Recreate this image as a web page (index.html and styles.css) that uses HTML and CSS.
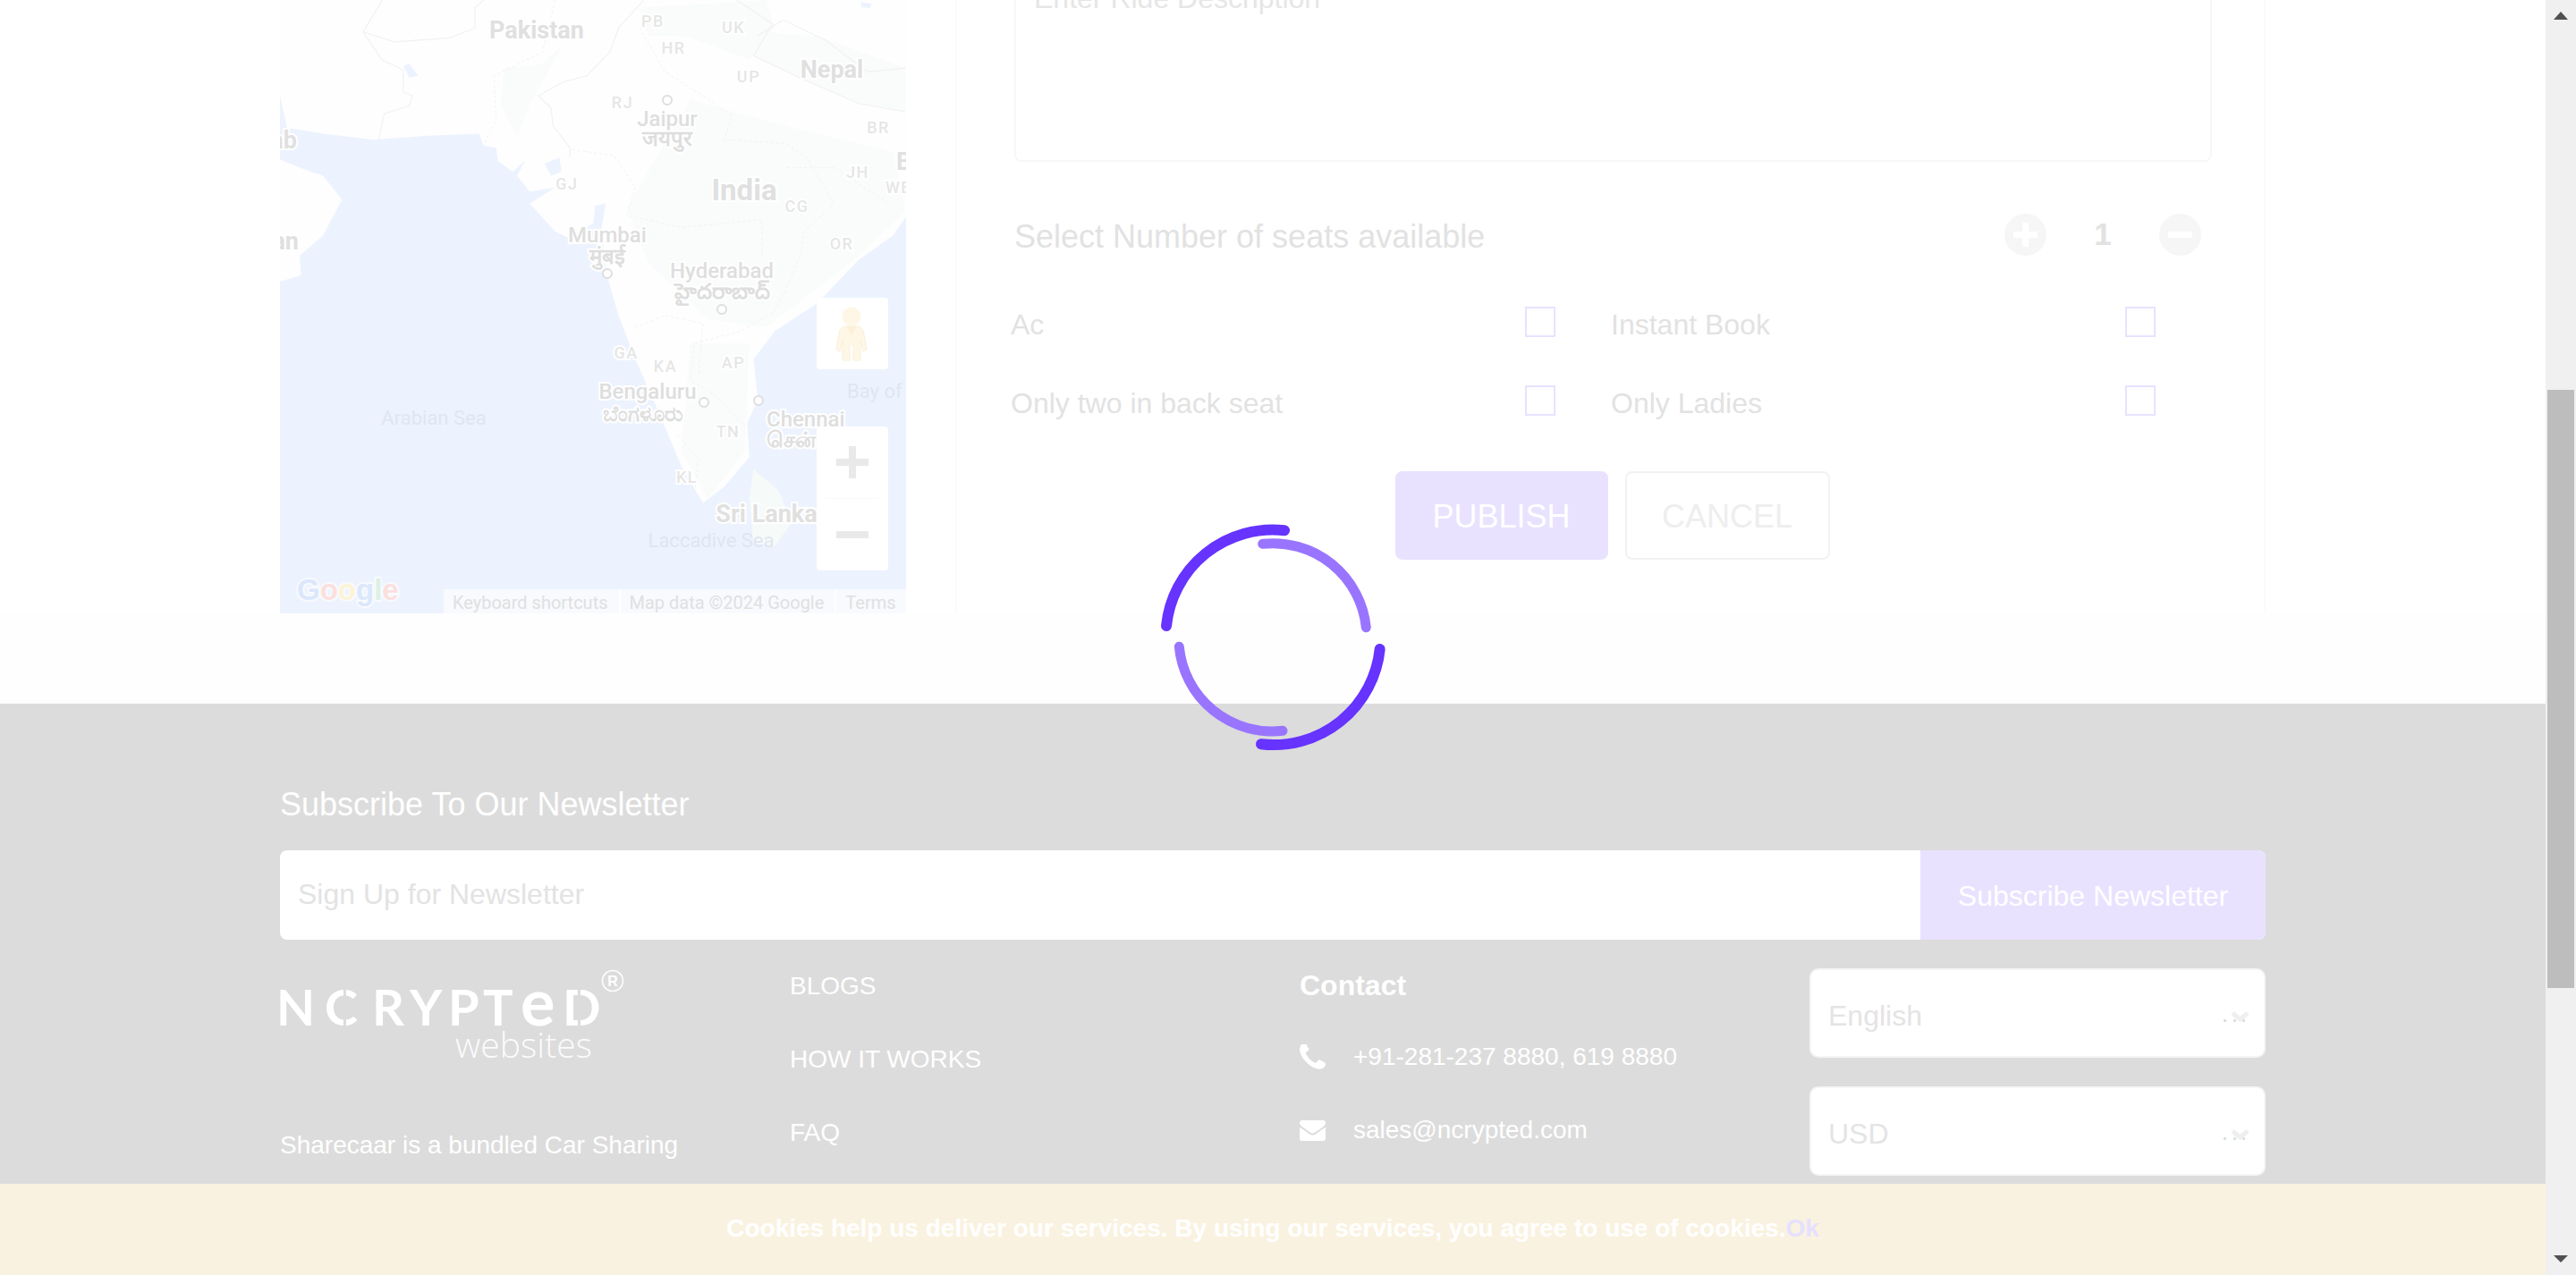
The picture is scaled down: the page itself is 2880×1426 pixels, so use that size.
FILE: index.html
```html
<!doctype html>
<html lang="en">
<head>
  <title>Post a Ride</title>
  <meta charset="utf-8" />
  <link rel="stylesheet" href="styles.css">
</head>
<body>

<div class="page">
  <section class="top">
    <div class="container top-row">

      <div class="map">
        <svg class="map-art" viewBox="0 0 700 746" width="700" height="746">
          <g transform="translate(-13.2 60) scale(.4719 .4464)">
            <rect x="0" y="-140" width="1600" height="1800" fill="#ecf3fe"/>
            <path class="land" d="M28 -140H1600V545H1510L1480 590L1400 650L1300 760L1200 830L1150 900L1160 1000L1135 1060L1140 1145L1080 1220L1030 1260L980 1170L920 1020L870 900L830 790L800 680L790 570L800 510L775 515L770 560L710 595L680 580L620 510L680 470L620 480L590 440L610 400L580 430L545 405L540 370L510 365L500 335L380 340L250 350L130 335L45 320L28 240Z"/>
            <path class="land" d="M28 400L100 430L130 440L175 500L130 590L75 640L78 690L28 705Z"/>
            <path class="isle" d="M1150 1175L1210 1230L1240 1310L1200 1370L1150 1360L1140 1250Z"/>
            <path class="green" d="M880 20L1180 0L1200 70L1140 150L1040 110L980 90L900 90Z"/>
            <path class="green" d="M1160 80L1300 90L1510 170V280L1400 260L1260 195L1150 140Z"/>
            <path class="green" d="M560 170L650 160L700 110L620 260L590 340L550 260Z"/>
            <path class="green" d="M1000 250L1240 320L1480 380L1510 530L1400 640L1280 740L1180 820L1040 800L900 660L850 520Z"/>
            <path class="green" d="M1000 860L1140 860L1130 1130L1040 1250L980 1130Z"/>
            <path class="water" d="M320 165L335 160L355 190L335 195Z"/>
            <path class="water" d="M655 410L690 395L695 430L670 440Z"/>
            <path class="water" d="M1405 5L1430 10L1425 20L1405 18Z"/>
            <path class="border" d="M270 -60V0L225 80L270 150L320 175L320 230L342 240L335 265L275 285L262 350"/>
            <path class="border" d="M225 80L300 105L430 95L490 70L490 20L510 0"/>
            <path class="border" d="M890 0L830 70L810 130L755 190L700 205L640 240L670 270L675 315L715 370L715 395"/>
            <path class="border" d="M1110 0L1195 60L1150 140L1260 195L1400 260L1510 280"/>
            <path class="border" d="M1160 90L1220 50L1320 100L1420 180L1510 170"/>
            <path class="state" d="M680 0L650 130L535 190L540 300L510 365"/>
            <path class="state" d="M880 70L940 180L1030 240L1100 290L1080 350L1230 360L1280 400L1340 510L1270 580L1260 640L1230 720L1200 780L1120 830L1010 860L1000 950L1070 1000L1130 1070"/>
            <path class="state" d="M720 375L820 390L870 470L850 540L980 570L1170 550L1170 640"/>
            <path class="state" d="M870 820L940 790L1030 810L1020 940"/>
            <path class="state" d="M970 1090L1020 1150L1010 1240"/>
            <path class="state" d="M1230 420L1340 420L1470 510"/>
          </g>

          <g transform="translate(0 60)">
            <text class="country" x="287" y="43">Pakistan</text>
            <text class="country" x="617" y="87">Nepal</text>
            <text class="country big" x="519" y="224">India</text>
            <text class="country" x="544" y="584">Sri Lanka</text>
            <text class="country end" x="19" y="166">Arab</text>
            <text class="country end" x="21" y="279">Oman</text>
            <text class="country start" x="689" y="190">Bangladesh</text>

            <text class="state-name" x="417" y="30">PB</text>
            <text class="state-name" x="507" y="37">UK</text>
            <text class="state-name" x="440" y="60">HR</text>
            <text class="state-name" x="524" y="92">UP</text>
            <text class="state-name" x="383" y="121">RJ</text>
            <text class="state-name" x="669" y="149">BR</text>
            <text class="state-name" x="321" y="212">GJ</text>
            <text class="state-name" x="646" y="199">JH</text>
            <text class="state-name" x="692" y="216">WB</text>
            <text class="state-name" x="578" y="237">CG</text>
            <text class="state-name" x="628" y="279">OR</text>
            <text class="state-name" x="387" y="401">GA</text>
            <text class="state-name" x="431" y="416">KA</text>
            <text class="state-name" x="507" y="412">AP</text>
            <text class="state-name" x="501" y="489">TN</text>
            <text class="state-name" x="455" y="540">KL</text>

            <text class="city" x="433" y="141">Jaipur</text>
            <text class="city local" x="433" y="163">जयपुर</text>
            <text class="city" x="366" y="271">Mumbai</text>
            <text class="city local" x="366" y="295">मुंबई</text>
            <text class="city" x="494" y="311">Hyderabad</text>
            <text class="city local" x="494" y="334">హైదరాబాద్</text>
            <text class="city" x="411" y="446">Bengaluru</text>
            <text class="city local" x="406" y="471">ಬೆಂಗಳೂರು</text>
            <text class="city start" x="544" y="477">Chennai</text>
            <text class="city local start" x="544" y="500">சென்னை</text>

            <circle class="dot" cx="433" cy="112" r="5"/>
            <circle class="dot" cx="366" cy="306" r="5"/>
            <circle class="dot" cx="494" cy="346" r="5"/>
            <circle class="dot" cx="474" cy="450" r="5"/>
            <circle class="dot" cx="535" cy="448" r="5"/>

            <text class="sea" x="172" y="475">Arabian Sea</text>
            <text class="sea" x="482" y="612">Laccadive Sea</text>
            <text class="sea start" x="634" y="445">Bay of</text>

            <text class="google" x="19" y="671"><tspan fill="#dbe7fb">G</tspan><tspan fill="#fbe0dd">o</tspan><tspan fill="#fdf3d6">o</tspan><tspan fill="#dbe7fb">g</tspan><tspan fill="#dcf0e3">l</tspan><tspan fill="#fbe0dd">e</tspan></text>
          </g>
        </svg>

        <div class="map-btn pegman">
          <svg viewBox="0 0 80 80" width="80" height="80">
            <circle cx="39" cy="21" r="10.5" fill="#fef7e6"/>
            <path d="M30 32H48L52 36L56 58L52 60L49 48V70H41V52H37V70H29V48L26 60L22 58L26 36Z" fill="#fef7e6" stroke="#f8f0dc" stroke-width="1"/>
            <path d="M33 32L39 42L45 32Z" fill="#fcf0d8"/>
          </svg>
        </div>

        <div class="map-btn zoom">
          <svg viewBox="0 0 80 161" width="80" height="161">
            <path d="M36 22H44V36H58V44H44V58H36V44H22V36H36Z" fill="#e9e9e9"/>
            <rect x="10" y="80" width="60" height="1" fill="#f8f8f8"/>
            <rect x="22" y="117" width="36" height="8" fill="#e9e9e9"/>
          </svg>
        </div>

        <div class="map-terms">
          <span class="term">Keyboard shortcuts</span>
          <span class="term">Map data ©2024 Google</span>
          <span class="term">Terms</span>
        </div>
      </div>

      <div class="ride-card">
        <div class="ride-desc">Enter Ride Description</div>

        <div class="seats">
          <span class="seats-label">Select Number of seats available</span>
          <div class="stepper">
            <svg class="step-btn" viewBox="0 0 47 47" width="47" height="47">
              <circle cx="23.5" cy="23.5" r="23.5" fill="#f6f6f6"/>
              <path d="M20 10H27V20H37V27H27V37H20V27H10V20H20Z" fill="#fff"/>
            </svg>
            <span class="step-value">1</span>
            <svg class="step-btn" viewBox="0 0 47 47" width="47" height="47">
              <circle cx="23.5" cy="23.5" r="23.5" fill="#f6f6f6"/>
              <rect x="10" y="20" width="27" height="7" fill="#fff"/>
            </svg>
          </div>
        </div>

        <div class="options">
          <div class="option"><span>Ac</span><i class="check"></i></div>
          <div class="option"><span>Instant Book</span><i class="check"></i></div>
          <div class="option"><span>Only two in back seat</span><i class="check"></i></div>
          <div class="option"><span>Only Ladies</span><i class="check"></i></div>
        </div>

        <div class="actions">
          <a class="btn btn-publish">PUBLISH</a>
          <a class="btn btn-cancel">CANCEL</a>
        </div>
      </div>

    </div>
  </section>

  <div class="gap-strip"></div>

  <footer class="footer">
    <div class="container">
      <h3 class="news-title">Subscribe To Our Newsletter</h3>
      <div class="news-form">
        <div class="news-input">Sign Up for Newsletter</div>
        <a class="news-btn">Subscribe Newsletter</a>
      </div>

      <div class="footer-cols">
        <div class="col-about">
          <svg class="logo" viewBox="0 0 385 105" width="385" height="105">
            <text class="logo-main" x="-4 50 103 145 188 227" y="64">NCRYPT<tspan class="logo-e" x="269">e</tspan><tspan x="316">D</tspan></text>
            <rect x="71" y="20" width="3" height="14" fill="#dcdcdc"/>
            <rect x="71" y="52" width="3" height="14" fill="#dcdcdc"/>
            <rect x="333" y="20" width="3" height="46" fill="#dcdcdc"/>
            <text class="logo-sub" x="196" y="100" textLength="153">websites</text>
            <circle cx="372" cy="14" r="11.5" fill="none" stroke="#fff" stroke-width="1.5"/>
            <text class="logo-r" x="372" y="20">R</text>
          </svg>
          <p class="about-text">Sharecaar is a bundled Car Sharing</p>
        </div>

        <div class="col-links">
          <a>BLOGS</a>
          <a>HOW IT WORKS</a>
          <a>FAQ</a>
        </div>

        <div class="col-contact">
          <h4>Contact</h4>
          <div class="contact-row">
            <svg viewBox="192 192 1408 1408" width="29" height="29"><path d="M1600 1240q0 27-10 70.5t-21 68.5q-21 50-122 106-94 51-186 51-27 0-53-3.5t-57.5-12.5-47-14.5-55.5-20.5-49-18q-98-35-175-83-127-79-264-216t-216-264q-48-77-83-175-3-9-18-49t-20.5-55.5-14.5-47-12.5-57.5-3.5-53q0-92 51-186 56-101 106-122 25-11 68.5-21t70.5-10q14 0 21 3 18 6 53 76 11 19 30 54t35 63.5 31 53.5q3 4 17.5 25t21.5 35.5 7 28.5q0 20-28.5 50t-62 55-62 53-28.5 46q0 9 5 22.5t8.5 20.5 14 24 11.5 19q76 137 174 235t235 174q2 1 19 11.5t24 14 20.5 8.5 22.5 5q18 0 46-28.5t53-62 55-62 50-28.5q14 0 28.5 7t35.5 21.5 25 17.5q25 15 53.5 31t63.5 35 54 30q70 35 76 53 3 7 3 21z" fill="#fff"/></svg>
            <span>+91-281-237 8880, 619 8880</span>
          </div>
          <div class="contact-row">
            <svg viewBox="0 256 1792 1408" width="29" height="23"><path d="M1792 710v794q0 66-47 113t-113 47h-1472q-66 0-113-47t-47-113v-794q44 49 101 87 362 246 497 345 57 42 92.5 65.5t94.5 48 110 24.5h2q51 0 110-24.5t94.5-48 92.5-65.5q170-123 498-345 57-39 100-87zm0-294q0 79-49 151t-122 123q-376 261-468 325-10 7-42.5 30.5t-54 38-52 32.5-57.5 27-50 9h-2q-23 0-50-9t-57.5-27-52-32.5-54-38-42.5-30.5q-91-64-262-182.5t-205-142.5q-62-42-117-115.5t-55-136.5q0-78 41.5-130t118.5-52h1472q65 0 112.5 47t47.5 113z" fill="#fff"/></svg>
            <span>sales@ncrypted.com</span>
          </div>
        </div>

        <div class="col-selects">
          <div class="select">
            <span>English</span>
            <svg viewBox="0 0 44 18" width="44" height="18"><rect x="3" y="14" width="3" height="3" fill="#d9e0e2"/><rect x="14" y="14" width="3" height="3" fill="#d9e0e2"/><rect x="24" y="14" width="3" height="3" fill="#d9e0e2"/><path d="M13 7L21.500 14L30 7" fill="none" stroke="#efefef" stroke-width="5"/></svg>
          </div>
          <div class="select">
            <span>USD</span>
            <svg viewBox="0 0 44 18" width="44" height="18"><rect x="3" y="14" width="3" height="3" fill="#d9e0e2"/><rect x="14" y="14" width="3" height="3" fill="#d9e0e2"/><rect x="24" y="14" width="3" height="3" fill="#d9e0e2"/><path d="M13 7L21.500 14L30 7" fill="none" stroke="#efefef" stroke-width="5"/></svg>
          </div>
        </div>
      </div>
    </div>
  </footer>
</div>

<div class="scrollbar">
  <svg viewBox="0 0 34 34" width="34" height="34"><path d="M9 22H25L17 13Z" fill="#505050"/></svg>
  <div class="scroll-track"><div class="scroll-thumb"></div></div>
  <svg viewBox="0 0 34 34" width="34" height="34"><path d="M9 12H25L17 20Z" fill="#505050"/></svg>
</div>

<div class="cookie-bar">
  <b>Cookies help us deliver our services. By using our services, you agree to use of cookies.<a>Ok</a></b>
</div>

<div class="loader">
  <svg viewBox="0 0 280 280" width="280" height="280">
    <g fill="none" stroke-linecap="round">
      <path d="M153 20.300A119.600 119.600 0 0 0 21 127" stroke="#6633ff" stroke-width="12"/>
      <path d="M259.700 153A119.600 119.600 0 0 1 127 259.300" stroke="#6633ff" stroke-width="12"/>
      <path d="M128.700 35.300A104.500 104.500 0 0 1 244.300 128.700" stroke="#9975ff" stroke-width="11"/>
      <path d="M35.300 150.300A104.500 104.500 0 0 0 151 244.300" stroke="#9975ff" stroke-width="11"/>
    </g>
  </svg>
</div>

</body>
</html>
```

FILE: styles.css
```css
html, body {
  margin: 0;
  height: 100%;
  overflow: hidden;
}

body {
  display: flex;
  background: #fff;
  font-family: "Liberation Sans", Arial, sans-serif;
  color: #e2e2e2;
}

.page {
  flex: 1;
  min-width: 0;
  margin-top: -60px;
}

.container {
  width: 2220px;
  margin: 0 auto;
}

/* ride form + map */
.top {
  height: 746px;
}

.top-row {
  display: flex;
  gap: 55px;
  height: 100%;
}

.map {
  position: relative;
  flex: 0 0 700px;
  height: 746px;
  overflow: hidden;
}

.map-art {
  display: block;
}

.land { fill: #fefefe; }
.isle { fill: #f6faf8; }
.green { fill: #f9fcfa; }
.water { fill: #ecf3fe; }
.border { fill: none; stroke: #f1f1f1; stroke-width: 2.5; }
.state { fill: none; stroke: #f1f1f1; stroke-width: 2; stroke-dasharray: 7 6; }

.map-art text {
  font-family: Roboto, sans-serif;
  text-anchor: middle;
  paint-order: stroke;
  stroke: #fff;
  stroke-width: 4px;
}

.map-art text.start { text-anchor: start; }
.map-art text.end { text-anchor: end; }

.country {
  font-size: 27px;
  font-weight: 700;
  fill: #e0e0e0;
}

.country.big { font-size: 33px; }

.state-name {
  font-size: 18px;
  font-weight: 500;
  letter-spacing: 1.5px;
  fill: #e6e6e6;
}

.city {
  font-size: 24px;
  font-weight: 500;
  fill: #dedede;
}

.city.local {
  font-weight: 700;
}

.dot {
  fill: #fff;
  stroke: #dedede;
  stroke-width: 2;
}

.map-art text.sea {
  font-size: 22px;
  fill: #dfe6f1;
  stroke: none;
}

.map-art text.google {
  font-family: "Liberation Sans", sans-serif;
  font-size: 33px;
  font-weight: 700;
  text-anchor: start;
  stroke: #f8fafe;
  stroke-width: 4px;
}

.map-btn {
  position: absolute;
  left: 600px;
  background: #fff;
  border-radius: 4px;
}

.map-btn svg {
  display: block;
}

.pegman {
  top: 393px;
  height: 80px;
}

.zoom {
  top: 537px;
  height: 161px;
}

.map-terms {
  position: absolute;
  right: 0;
  bottom: 0;
  left: 183px;
  display: flex;
  height: 27px;
  background: #f8fafe;
  font-family: Roboto, sans-serif;
  font-size: 20px;
  line-height: 30px;
  color: #e0e0e0;
}

.term {
  padding: 0 12px 0 10px;
  border-right: 2px solid #fff;
  white-space: nowrap;
}

.term:last-child {
  border: 0;
}

.ride-card {
  flex: 1;
  height: 746px;
  box-sizing: border-box;
  padding: 0 58px 0 64px;
  border-right: 2px solid #fbfbfb;
  border-left: 2px solid #fbfbfb;
}

.ride-desc {
  box-sizing: border-box;
  height: 241px;
  padding: 40px 20px 0;
  border: 2px solid #f7f7f7;
  border-top: 0;
  border-radius: 0 0 8px 8px;
  font-size: 32px;
  line-height: 36px;
  color: #e6e6e6;
}

.seats {
  display: flex;
  align-items: center;
  justify-content: space-between;
  height: 47px;
  margin-top: 58px;
  padding-right: 12px;
}

.seats-label {
  font-size: 36px;
  padding-top: 4px;
}

.stepper {
  display: flex;
  align-items: center;
  width: 220px;
  justify-content: space-between;
}

.step-value {
  font-size: 35px;
  font-weight: 700;
  margin-top: -2px;
}

.options {
  display: grid;
  grid-template-columns: 609px 609px;
  column-gap: 62px;
  row-gap: 54px;
  margin: 57px 0 0 -4px;
}

.option {
  display: flex;
  align-items: center;
  justify-content: space-between;
  height: 34px;
  font-size: 32px;
}

.option span {
  margin-top: 6px;
}

.check {
  box-sizing: border-box;
  width: 34px;
  height: 34px;
  border: 2px solid #e8e2ff;
}

.actions {
  display: flex;
  justify-content: center;
  gap: 19px;
  margin-top: 62px;
  padding-right: 2px;
}

.btn {
  box-sizing: border-box;
  display: block;
  height: 99px;
  border-radius: 8px;
  font-size: 36px;
  line-height: 102px;
  text-align: center;
}

.btn-publish {
  width: 238px;
  background: #e8e2ff;
  color: #fff;
}

.btn-cancel {
  width: 229px;
  border: 2px solid #f2f2f2;
  line-height: 98px;
  color: #eeeeee;
}

.gap-strip {
  height: 101px;
  background: #fefefe;
}

/* footer */
.footer {
  height: 700px;
  background: #dcdcdc;
  color: #fff;
}

.news-title {
  margin: 0;
  padding-top: 92px;
  font-size: 36px;
  font-weight: 400;
  line-height: 42px;
}

.news-form {
  display: flex;
  height: 100px;
  margin-top: 30px;
  border-radius: 8px;
  overflow: hidden;
  background: #fff;
}

.news-input {
  flex: 1;
  padding-left: 20px;
  font-size: 32px;
  line-height: 98px;
  color: #e3e3e3;
}

.news-btn {
  width: 386px;
  background: #e8e2ff;
  font-size: 32px;
  line-height: 102px;
  text-align: center;
  color: #fff;
}

.footer-cols {
  display: grid;
  grid-template-columns: repeat(4, 510px);
  column-gap: 60px;
  padding-top: 32px;
}

.logo {
  display: block;
}

.logo-main {
  font-family: Lato, sans-serif;
  font-size: 56px;
  font-weight: 700;
  fill: #fff;
}

.logo-e {
  font-size: 72px;
}

.logo-sub {
  font-family: "Open Sans", sans-serif;
  font-size: 39px;
  font-weight: 300;
  fill: #fbfbfb;
}

.logo-r {
  font-family: "Liberation Sans", sans-serif;
  font-size: 16px;
  font-weight: 700;
  text-anchor: middle;
  fill: #fff;
}

.about-text {
  margin: 76px 0 0;
  font-size: 28px;
  line-height: 34px;
}

.col-links {
  padding-top: 4px;
}

.col-links a {
  display: block;
  margin-bottom: 50px;
  font-size: 28px;
  line-height: 32px;
}

.col-contact {
  padding-top: 1px;
}

.col-contact h4 {
  margin: 0 0 37px;
  font-size: 32px;
  line-height: 36px;
}

.contact-row {
  display: flex;
  align-items: center;
  gap: 31px;
  height: 50px;
  margin-bottom: 32px;
  font-size: 28px;
}

.select {
  box-sizing: border-box;
  display: flex;
  align-items: center;
  justify-content: space-between;
  height: 100px;
  margin-bottom: 32px;
  padding: 4px 4px 0 19px;
  border: 2px solid #f5f5f5;
  border-radius: 10px;
  background: #fff;
  font-size: 32px;
  color: #e4e4e4;
}

.select span {
  margin-top: 2px;
}

/* fake scrollbar */
.scrollbar {
  display: flex;
  flex-direction: column;
  flex: 0 0 34px;
  background: #f0f0f0;
}

.scrollbar svg {
  display: block;
}

.scroll-track {
  flex: 1;
}

.scroll-thumb {
  width: 30px;
  height: 669px;
  margin: 402px 0 0 2px;
  background: #bdbdbd;
}

/* overlays */
.cookie-bar {
  position: fixed;
  right: 34px;
  bottom: 0;
  left: 0;
  height: 102px;
  background: #faf2e0;
  font-size: 28px;
  line-height: 100px;
  text-align: center;
  color: #fff;
}

.cookie-bar a {
  color: #e6e0ff;
}

.loader {
  position: fixed;
  top: 0;
  right: 34px;
  bottom: 0;
  left: 0;
  display: flex;
  align-items: center;
  justify-content: center;
}
```
